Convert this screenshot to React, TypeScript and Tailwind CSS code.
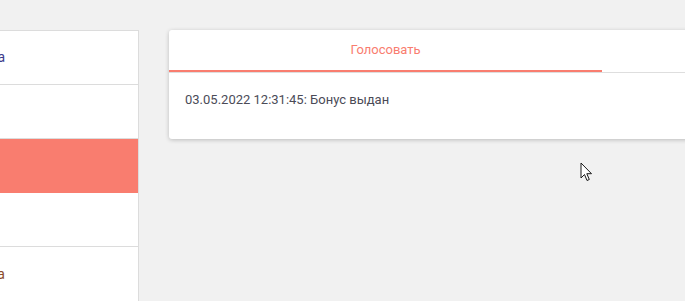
import React from 'react';

const rows = [
  { label: 'Главная страница', color: 'text-[#3d3a8c]' },
  { label: '', color: '' },
  { label: '', color: '', active: true },
  { label: '', color: '' },
  { label: 'Статистика', color: 'text-[#8a4a2c]' },
];

const Cursor = () => (
  <svg width="13" height="20" viewBox="0 0 13 20" className="absolute left-[580px] top-[162px]">
    <path
      d="M1 1 L1 16 L4.5 12.5 L7 18.5 L9.3 17.5 L6.8 11.7 L11.5 11.7 Z"
      fill="#fff"
      stroke="#1a1a1a"
      strokeWidth="1"
      strokeLinejoin="round"
    />
  </svg>
);

const App: React.FC = () => {
  return (
    <div
      className="relative h-[301px] w-[685px] overflow-hidden bg-[#f1f1f1]"
      style={{ fontFamily: 'Roboto, "Liberation Sans", sans-serif' }}
    >
      <div className="flex items-start gap-[30px] pt-[30px]">
        {/* Menu */}
        <div className="w-[139px] shrink-0 border border-l-0 border-[#dcdcdc] bg-white">
          {rows.map((row, i) => (
            <div
              key={i}
              className={`flex h-[54px] items-center border-b last:border-b-0 ${
                row.active ? 'border-[#f97d6f] bg-[#f97d6f]' : 'border-[#dcdcdc] bg-white'
              }`}
            >
              {row.label && (
                <div className={`flex w-[5px] justify-end whitespace-nowrap text-[14px] ${row.color}`}>
                  {row.label}
                </div>
              )}
            </div>
          ))}
        </div>

        {/* Tabs card */}
        <div className="w-[866px] shrink-0 rounded-[3px] bg-white shadow-[0_1px_4px_rgba(0,0,0,0.22)]">
          <div className="flex border-b border-[#dedede]">
            <div className="-mb-px flex h-[42px] w-[433px] items-center justify-center border-b-2 border-[#f97d6f] text-[13px] text-[#f97d6f]">
              Голосовать
            </div>
            <div className="h-[42px] w-[433px]" />
          </div>
          <div className="h-[66px] px-[16px] pt-[19px] text-[13px] leading-[16px] text-[#4b4b57]">
            03.05.2022 12:31:45: Бонус выдан
          </div>
        </div>
      </div>
      <Cursor />
    </div>
  );
};

export default App;
